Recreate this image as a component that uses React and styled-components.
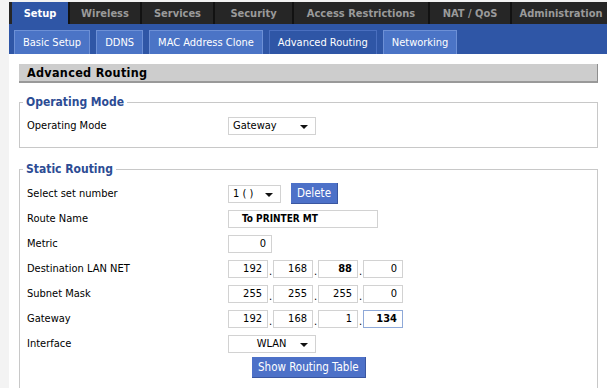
import React from "react";
import styled, { createGlobalStyle } from "styled-components";

const GlobalStyle = createGlobalStyle`
  html, body {
    margin: 0;
    padding: 0;
    background: #f3f3f3;
    font-family: "DejaVu Sans Condensed", "DejaVu Sans", sans-serif;
    font-size: 11px;
    color: #000;
  }
`;

const mainTabs = [
  { label: "Setup", width: 58 },
  { label: "Wireless", width: 72 },
  { label: "Services", width: 73 },
  { label: "Security", width: 79 },
  { label: "Access Restrictions", width: 136 },
  { label: "NAT / QoS", width: 82 },
  { label: "Administration", width: 100 },
];
const subTabs = ["Basic Setup", "DDNS", "MAC Address Clone", "Advanced Routing", "Networking"];

function App() {
  return (
    <>
      <GlobalStyle />
      <Page>
        <Main>
          <TopNav>
            {mainTabs.map((t, i) => (
              <MainTab key={t.label} $w={t.width} $active={i === 0}>{t.label}</MainTab>
            ))}
          </TopNav>
          <SubNav>
            {subTabs.map((t) => (
              <SubTab key={t} $active={t === "Advanced Routing"}>{t}</SubTab>
            ))}
          </SubNav>
          <Content>
            <SectionTitle>Advanced Routing</SectionTitle>

            <Fieldset>
              <Legend>Operating Mode</Legend>
              <Row>
                <Label>Operating Mode</Label>
                <Select $w={88}>Gateway</Select>
              </Row>
            </Fieldset>

            <Fieldset $open>
              <Legend>Static Routing</Legend>
              <Row>
                <Label>Select set number</Label>
                <Select $w={53}>1 ( )</Select>
                <Button $ml={10}>Delete</Button>
              </Row>
              <Row>
                <Label>Route Name</Label>
                <TextInput $w={150} $bold>To PRINTER MT</TextInput>
              </Row>
              <Row>
                <Label>Metric</Label>
                <TextInput $w={44} $right>0</TextInput>
              </Row>
              <Row>
                <Label>Destination LAN NET</Label>
                <IpField parts={["192", "168", "88", "0"]} boldIndex={2} />
              </Row>
              <Row>
                <Label>Subnet Mask</Label>
                <IpField parts={["255", "255", "255", "0"]} />
              </Row>
              <Row>
                <Label>Gateway</Label>
                <IpField parts={["192", "168", "1", "134"]} boldIndex={3} focusIndex={3} />
              </Row>
              <Row>
                <Label>Interface</Label>
                <Select $w={88} $center>WLAN</Select>
              </Row>
              <ButtonRow>
                <Button>Show Routing Table</Button>
              </ButtonRow>
            </Fieldset>
          </Content>
        </Main>
      </Page>
    </>
  );
}

function IpField({ parts, boldIndex, focusIndex }) {
  return (
    <IpGroup>
      {parts.map((p, i) => (
        <React.Fragment key={i}>
          <IpBox $bold={i === boldIndex} $focus={i === focusIndex}>{p}</IpBox>
          {i < parts.length - 1 && <Dot>.</Dot>}
        </React.Fragment>
      ))}
    </IpGroup>
  );
}

function Select({ children, ...rest }) {
  return (
    <SelectBox {...rest}>
      <SelectText $center={rest.$center}>{children}</SelectText>
      <Caret />
    </SelectBox>
  );
}

const Page = styled.div`
  padding: 2px 0 0 9px;
  height: 386px;
  overflow: hidden;
`;

const Main = styled.div`
  background: #fff;
  height: 100%;
`;

const TopNav = styled.div`
  display: flex;
  height: 22px;
  background: #262626;
  padding-left: 3px;
  overflow: hidden;
`;

const MainTab = styled.div`
  box-sizing: border-box;
  flex-shrink: 0;
  width: ${(p) => p.$w}px;
  display: flex;
  align-items: center;
  justify-content: center;
  border-right: 2px solid #121212;
  font-weight: bold;
  font-size: 11px;
  white-space: nowrap;
  color: ${(p) => (p.$active ? "#ffffff" : "#9a9a9a")};
  background: ${(p) => (p.$active ? "#2f56a6" : "transparent")};
`;

const SubNav = styled.div`
  display: flex;
  align-items: flex-end;
  gap: 6px;
  height: 30px;
  background: #2f56a6;
  padding-left: 5px;
`;

const SubTab = styled.div`
  height: 23px;
  display: flex;
  align-items: center;
  padding: 0 8px;
  color: #fff;
  font-size: 11px;
  white-space: nowrap;
  background: ${(p) => (p.$active ? "#2f56a6" : "#4b74c6")};
  border: 1px solid ${(p) => (p.$active ? "#4a6fbf" : "#6d90d6")};
  border-bottom: none;
`;

const Content = styled.div`
  padding: 10px 9px 0 10px;
`;

const SectionTitle = styled.div`
  height: 17px;
  line-height: 17px;
  background: #cdcdcd;
  border-right: 1px solid #8e8e8e;
  border-bottom: 2px solid #999;
  padding-left: 8px;
  font-weight: bold;
  font-size: 12.5px;
  letter-spacing: 0.3px;
`;

const Fieldset = styled.fieldset`
  margin: ${(p) => (p.$open ? "14px" : "12px")} 0 0;
  padding: ${(p) => (p.$open ? "5px" : "4px")} 7px 9px;
  border: 1px solid #c8c8c8;
  ${(p) => p.$open && "border-bottom: none; padding-bottom: 20px;"}
`;

const Legend = styled.legend`
  margin-left: -4px;
  padding: 0 3px;
  color: #2c4c94;
  font-weight: bold;
  font-size: 12px;
`;

const Row = styled.div`
  display: flex;
  align-items: center;
  height: 25px;
`;

const Label = styled.div`
  width: 201px;
  flex-shrink: 0;
`;

const SelectBox = styled.div`
  box-sizing: border-box;
  width: ${(p) => p.$w}px;
  height: 18px;
  display: flex;
  align-items: center;
  border: 1px solid #d2d2d2;
  padding: 0 7px 0 4px;
`;

const SelectText = styled.span`
  flex: 1;
  text-align: ${(p) => (p.$center ? "center" : "left")};
  padding-left: ${(p) => (p.$center ? "10px" : "0")};
`;

const Caret = styled.span`
  width: 0;
  height: 0;
  border-left: 4px solid transparent;
  border-right: 4px solid transparent;
  border-top: 4px solid #111;
  margin-top: 2px;
`;

const TextInput = styled.div`
  box-sizing: border-box;
  width: ${(p) => p.$w}px;
  height: 18px;
  line-height: 16px;
  border: 1px solid #d2d2d2;
  padding: ${(p) => (p.$right ? "0 5px" : "0 13px")};
  text-align: ${(p) => (p.$right ? "right" : "left")};
  font-weight: ${(p) => (p.$bold ? "bold" : "normal")};
  font-size: ${(p) => (p.$bold ? "10px" : "11px")};
`;

const IpGroup = styled.div`
  display: flex;
  align-items: flex-end;
`;

const IpBox = styled.div`
  box-sizing: border-box;
  width: 40px;
  height: 18px;
  line-height: 16px;
  border: 1px solid ${(p) => (p.$focus ? "#8fa9d8" : "#d2d2d2")};
  padding: 0 5px;
  text-align: right;
  font-weight: ${(p) => (p.$bold ? "bold" : "normal")};
`;

const Dot = styled.span`
  width: 5px;
  text-align: center;
  line-height: 12px;
`;

const ButtonRow = styled.div`
  display: flex;
  padding-left: 225px;
  margin-top: 1px;
`;

const Button = styled.div`
  margin-left: ${(p) => p.$ml || 0}px;
  height: 20px;
  line-height: 20px;
  padding: 0 6px;
  background: #4d71c8;
  border-right: 1px solid #3a56a0;
  border-bottom: 1px solid #3a56a0;
  color: #fff;
  font-size: 11.5px;
  white-space: nowrap;
`;

export default App;
